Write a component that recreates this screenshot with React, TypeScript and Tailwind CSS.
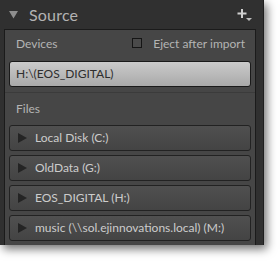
import React from 'react';

const files = [
  'Local Disk (C:)',
  'OldData (G:)',
  'EOS_DIGITAL (H:)',
  'music (\\\\sol.ejinnovations.local) (M:)',
];

function PlusMenu() {
  return (
    <svg width="16" height="14" viewBox="0 0 16 14" className="block">
      <rect x="4" y="1" width="2" height="9" fill="#cfcfcf" />
      <rect x="0.5" y="4.5" width="9" height="2" fill="#cfcfcf" />
      <path d="M9 10 L15 10 L12 13 Z" fill="#bdbdbd" />
    </svg>
  );
}

export default function App() {
  return (
    <div className="w-[280px] h-[261px] bg-white" style={{ fontFamily: 'Lato, "Noto Sans", sans-serif' }}>
      <div className="w-[264px] h-[245px] bg-[#303030] border-r border-[#1e1e1e] flex flex-col shadow-[3px_4px_9px_rgba(0,0,0,0.55)]">
        {/* header */}
        <div className="h-[29px] flex items-center pl-[9px] pr-[10px] shrink-0">
          <svg width="9" height="9" viewBox="0 0 9 9" className="block">
            <path d="M0 1 L9 1 L4.5 8.5 Z" fill="#8e8e8e" />
          </svg>
          <span className="ml-[11px] text-[16px] leading-none text-[#b3b3b3] tracking-[0.2px]">Source</span>
          <div className="ml-auto mt-[1px]">
            <PlusMenu />
          </div>
        </div>

        {/* inner panel */}
        <div className="flex-1 ml-[4px] mr-[7px] border border-b-0 border-[#1b1b1b] bg-[#464646] flex flex-col">
          <div className="px-[4px] pb-[5px]">
            <div className="h-[28px] flex items-center pl-[7px] pr-[6px] text-[12px] text-[#b4b4b4]">
              <span>Devices</span>
              <span className="ml-auto w-[10px] h-[10px] border border-[#151515] bg-[#4a4a4a] mb-[3px]" />
              <span className="ml-[11px]">Eject after import</span>
            </div>
            <div className="mt-[3px] h-[26px] rounded-[3px] border border-[#1a1a1a] bg-gradient-to-b from-[#cbcbcb] to-[#a9a9a9] flex items-center pl-[6px] text-[12px] text-[#2e2e2e]">
              H:\(EOS_DIGITAL)
            </div>
          </div>
          <div className="h-px bg-[#3b3b3b]" />
          <div className="px-[4px] flex flex-col">
            <div className="h-[32px] flex items-center pl-[7px] text-[12px] text-[#b4b4b4]">Files</div>
            <div className="flex flex-col gap-[4px]">
              {files.map((f) => (
                <div
                  key={f}
                  className="h-[26px] rounded-[3px] border border-[#222] bg-gradient-to-b from-[#505050] to-[#444] flex items-center pl-[8px] text-[12px] text-[#cccccc]"
                >
                  <svg width="9" height="10" viewBox="0 0 9 10" className="block shrink-0">
                    <path d="M0 0 L9 5 L0 10 Z" fill="#242424" />
                  </svg>
                  <span className="ml-[8px] whitespace-nowrap">{f}</span>
                </div>
              ))}
            </div>
          </div>
        </div>
      </div>
    </div>
  );
}
